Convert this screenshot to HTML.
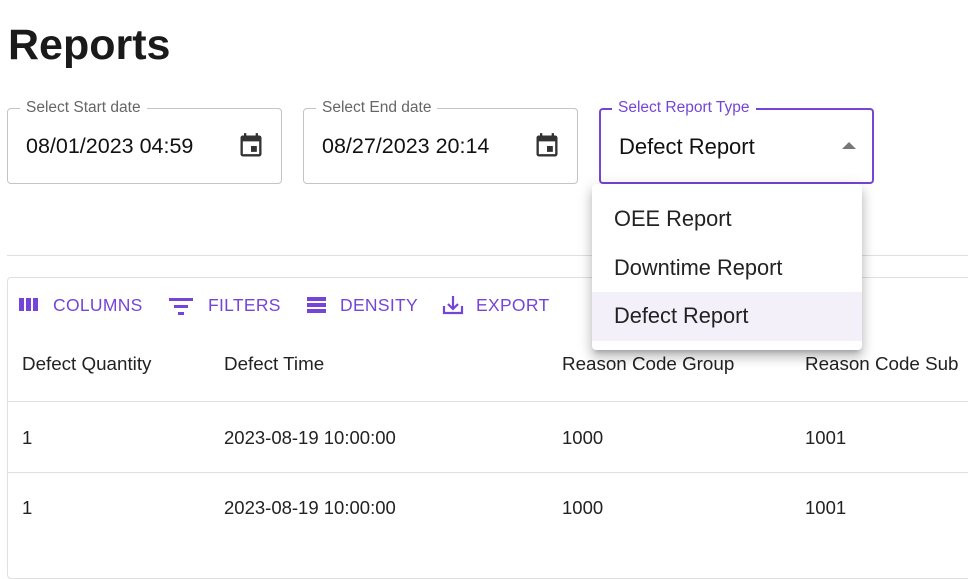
<!DOCTYPE html>
<html><head><style>
body{margin:0;width:968px;height:523px;overflow:hidden;background:#fff;font-family:"Liberation Sans",Arial,sans-serif;position:relative;color:#000}
.abs{position:absolute}
h1{position:absolute;left:8px;top:21px;margin:0;font-size:43px;font-weight:bold;color:#1a1a1a}
.f{position:absolute;top:108px;width:275px;height:76px;border:1px solid #c4c4c4;border-radius:4px;box-sizing:border-box}
.lab{position:absolute;top:-10px;left:12px;background:#fff;padding:0 6px;font-size:15.5px;color:#666}
.val{position:absolute;left:18px;top:25px;font-size:21.5px;color:#111}
.cal{position:absolute;right:16px;top:23px}
.tb{position:absolute;top:295px;font-size:17.5px;color:#7445d8;letter-spacing:.3px}
.hd{position:absolute;top:353px;font-size:18.8px;color:#222}
.cell{position:absolute;font-size:18.5px;color:#222}
.menu{position:absolute;left:592px;top:184px;width:270px;height:166px;background:#fff;border-radius:4px;box-shadow:0 5px 5px -3px rgba(0,0,0,.2),0 8px 10px 1px rgba(0,0,0,.14),0 3px 14px 2px rgba(0,0,0,.12)}
.mi{position:absolute;left:22px;font-size:21.8px;color:#222}
</style></head><body>
<h1>Reports</h1>
<div class="f" style="left:7px"><span class="lab">Select Start date</span><span class="val">08/01/2023 04:59</span>
<svg class="cal" width="28" height="28" viewBox="0 0 24 24"><path fill="#333" d="M17 12h-5v5h5v-5zM16 1v2H8V1H6v2H5c-1.11 0-2 .9-2 2v14c0 1.1.89 2 2 2h14c1.1 0 2-.9 2-2V5c0-1.1-.9-2-2-2h-1V1h-2zm3 18H5V8h14v11z"/></svg></div>
<div class="f" style="left:303px"><span class="lab">Select End date</span><span class="val">08/27/2023 20:14</span>
<svg class="cal" width="28" height="28" viewBox="0 0 24 24"><path fill="#333" d="M17 12h-5v5h5v-5zM16 1v2H8V1H6v2H5c-1.11 0-2 .9-2 2v14c0 1.1.89 2 2 2h14c1.1 0 2-.9 2-2V5c0-1.1-.9-2-2-2h-1V1h-2zm3 18H5V8h14v11z"/></svg></div>
<div class="f" style="left:599px;width:275px;height:76px;border:2px solid #7445d8"><span class="lab" style="color:#7445d8;left:11px;top:-11px">Select Report Type</span><span class="val" style="top:24px;font-size:22px">Defect Report</span>
<svg class="abs" style="left:240px;top:31px" width="16" height="10" viewBox="0 0 16 10"><path d="M1 8L8 1l7 7z" fill="#777"/></svg></div>
<div class="abs" style="left:7px;top:255px;width:961px;height:1px;background:#e0e0e0"></div>
<div class="abs" style="left:7px;top:277px;width:970px;height:300px;border:1px solid #e0e0e0;border-radius:4px"></div>
<svg class="abs" style="left:19px;top:297px" width="20" height="16" viewBox="0 0 20 16"><rect x="0" y="1" width="5" height="13" fill="#7445d8"/><rect x="7" y="1" width="5" height="13" fill="#7445d8"/><rect x="14" y="1" width="5" height="13" fill="#7445d8"/></svg>
<span class="tb" style="left:53px">COLUMNS</span>
<svg class="abs" style="left:168px;top:296px" width="26" height="20" viewBox="0 0 26 20"><rect x="1" y="2" width="24" height="3" fill="#7445d8"/><rect x="6" y="9" width="14" height="3" fill="#7445d8"/><rect x="10" y="16" width="6" height="3" fill="#7445d8"/></svg>
<span class="tb" style="left:208px">FILTERS</span>
<svg class="abs" style="left:307px;top:296px" width="20" height="18" viewBox="0 0 20 18"><rect x="0" y="1" width="19" height="4" fill="#7445d8"/><rect x="0" y="7" width="19" height="4" fill="#7445d8"/><rect x="0" y="13" width="19" height="4" fill="#7445d8"/></svg>
<span class="tb" style="left:340px">DENSITY</span>
<svg class="abs" style="left:442px;top:294px" width="22" height="22" viewBox="0 0 22 22"><path d="M2 12v7h18v-7" fill="none" stroke="#7445d8" stroke-width="2.2"/><path d="M11 2v12M6 10l5 5 5-5" fill="none" stroke="#7445d8" stroke-width="2.2"/></svg>
<span class="tb" style="left:476px">EXPORT</span>
<span class="hd" style="left:22px">Defect Quantity</span><span class="hd" style="left:224px">Defect Time</span><span class="hd" style="left:562px">Reason Code Group</span><span class="hd" style="left:805px">Reason Code Sub</span>
<div class="abs" style="left:8px;top:401px;width:960px;height:1px;background:#e0e0e0"></div>
<div class="abs" style="left:8px;top:472px;width:960px;height:1px;background:#e0e0e0"></div>
<span class="cell" style="left:22px;top:427px">1</span><span class="cell" style="left:224px;top:427px">2023-08-19 10:00:00</span><span class="cell" style="left:562px;top:427px">1000</span><span class="cell" style="left:805px;top:427px">1001</span>
<span class="cell" style="left:22px;top:497px">1</span><span class="cell" style="left:224px;top:497px">2023-08-19 10:00:00</span><span class="cell" style="left:562px;top:497px">1000</span><span class="cell" style="left:805px;top:497px">1001</span>
<div class="menu">
<div class="abs" style="left:0;top:108px;width:270px;height:49px;background:#f3f0fa"></div>
<span class="mi" style="top:22px">OEE Report</span>
<span class="mi" style="top:71px">Downtime Report</span>
<span class="mi" style="top:119px">Defect Report</span>
</div>
</body></html>
